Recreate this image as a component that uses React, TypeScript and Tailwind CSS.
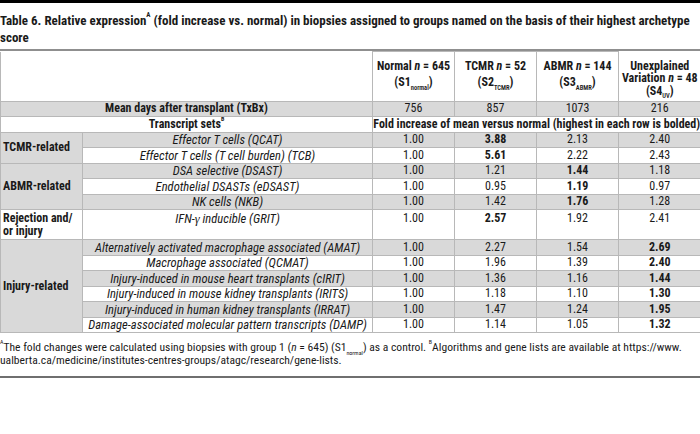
type Row = {
  cat?: string;
  span?: number;
  catGray?: boolean;
  name: React.ReactNode;
  v: string[];
  bold: number;
  tall?: boolean;
};

const ROWS: Row[] = [
  { cat: "TCMR-related", span: 2, catGray: true, name: "Effector T cells (QCAT)", v: ["1.00", "3.88", "2.13", "2.40"], bold: 1 },
  { name: "Effector T cells (T cell burden) (TCB)", v: ["1.00", "5.61", "2.22", "2.43"], bold: 1 },
  { cat: "ABMR-related", span: 3, catGray: true, name: "DSA selective (DSAST)", v: ["1.00", "1.21", "1.44", "1.18"], bold: 2 },
  { name: "Endothelial DSASTs (eDSAST)", v: ["1.00", "0.95", "1.19", "0.97"], bold: 2 },
  { name: "NK cells (NKB)", v: ["1.00", "1.42", "1.76", "1.28"], bold: 2 },
  {
    cat: "Rejection and/ or injury",
    span: 1,
    catGray: false,
    name: (
      <>
        IFN-<span className="font-['Liberation_Serif',serif]">γ</span> inducible (GRIT)
      </>
    ),
    v: ["1.00", "2.57", "1.92", "2.41"],
    bold: 1,
    tall: true,
  },
  { cat: "Injury-related", span: 6, catGray: true, name: "Alternatively activated macrophage associated (AMAT)", v: ["1.00", "2.27", "1.54", "2.69"], bold: 3 },
  { name: "Macrophage associated (QCMAT)", v: ["1.00", "1.96", "1.39", "2.40"], bold: 3 },
  { name: "Injury-induced in mouse heart transplants (cIRIT)", v: ["1.00", "1.36", "1.16", "1.44"], bold: 3 },
  { name: "Injury-induced in mouse kidney transplants (IRITS)", v: ["1.00", "1.18", "1.10", "1.30"], bold: 3 },
  { name: "Injury-induced in human kidney transplants (IRRAT)", v: ["1.00", "1.47", "1.24", "1.95"], bold: 3 },
  { name: "Damage-associated molecular pattern transcripts (DAMP)", v: ["1.00", "1.14", "1.05", "1.32"], bold: 3 },
];

const CELL = "border border-[#b8b8b8] p-0";

function GroupHead({ title, n, num, sub }: { title: string; n: string; num: string; sub: string }) {
  return (
    <th className={`${CELL} align-top pt-[6px] leading-[16px] font-bold text-center`}>
      <div>
        {title} <i>n</i> = {n}
      </div>
      <div>
        (S{num}
        <sub className="text-[6.5px] align-[-2px] font-semibold leading-none">{sub}</sub>)
      </div>
    </th>
  );
}

export default function App() {
  return (
    <div className="w-[700px] h-[434px] overflow-hidden bg-white text-[#1a1a1a] font-['Roboto_Condensed','Liberation_Sans_Narrow',sans-serif]">
      <div className="h-[3px] bg-black" />

      <div className="mt-[9px] text-[13px] font-bold leading-[17px]">
        <div className="whitespace-nowrap">
          Table 6. Relative expression<sup className="text-[7px] align-[5px]">A</sup> (fold increase vs. normal) in
          biopsies assigned to groups named on the basis of their highest archetype
        </div>
        <div>score</div>
      </div>

      <div className="mt-[3px] h-[2px] bg-[#8f8f8f]" />

      <table className="w-[700px] table-fixed border-collapse text-[12px] leading-[13px]">
        <colgroup>
          <col className="w-[82px]" />
          <col className="w-[290px]" />
          <col className="w-[82px]" />
          <col className="w-[82px]" />
          <col className="w-[82px]" />
          <col className="w-[82px]" />
        </colgroup>
        <thead>
          <tr className="h-[49.5px]">
            <th colSpan={2} className="border-l border-r border-b border-[#b8b8b8] p-0" />
            <GroupHead title="Normal" n="645" num="1" sub="normal" />
            <GroupHead title="TCMR" n="52" num="2" sub="TCMR" />
            <GroupHead title="ABMR" n="144" num="3" sub="ABMR" />
            <th className="border-b border-l border-[#b8b8b8] p-0 align-top pt-[8px] leading-[12.5px] font-bold text-center">
              <div>Unexplained</div>
              <div>
                Variation <i>n</i> = 48
              </div>
              <div>
                (S4<sub className="text-[6.5px] align-[-2px] font-semibold leading-none">UV</sub>)
              </div>
            </th>
          </tr>
        </thead>
        <tbody>
          <tr className="h-[15.5px] bg-[#d9d9d9]">
            <td colSpan={2} className={`${CELL} font-bold text-center`}>
              Mean days after transplant (TxBx)
            </td>
            <td className={`${CELL} text-center`}>756</td>
            <td className={`${CELL} text-center`}>857</td>
            <td className={`${CELL} text-center`}>1073</td>
            <td className={`${CELL} border-r-0 text-center`}>216</td>
          </tr>
          <tr className="h-[15.5px]">
            <td colSpan={2} className={`${CELL} font-bold text-center`}>
              Transcript sets<sup className="text-[6px] align-[4px] leading-none">B</sup>
            </td>
            <td colSpan={4} className={`${CELL} border-r-0 font-bold text-center whitespace-nowrap`}>
              Fold increase of mean versus normal (highest in each row is bolded)
            </td>
          </tr>
          {ROWS.map((r, i) => {
            const gray = i % 2 === 0;
            const va = r.tall ? "align-top pt-[2px]" : "align-middle";
            return (
              <tr key={i} className={`${r.tall ? "h-[30px]" : "h-[15.5px]"} ${gray ? "bg-[#d9d9d9]" : "bg-white"}`}>
                {r.cat && (
                  <td
                    rowSpan={r.span}
                    className={`${CELL} pl-[2px] text-left font-bold leading-[13px] align-middle ${r.catGray ? "bg-[#d9d9d9]" : "bg-white"}`}
                  >
                    {r.cat === "Rejection and/ or injury" ? (
                      <>
                        Rejection and/
                        <br />
                        or injury
                      </>
                    ) : (
                      r.cat
                    )}
                  </td>
                )}
                <td className={`${CELL} ${va} text-center italic text-[12.6px] whitespace-nowrap`}>{r.name}</td>
                {r.v.map((x, j) => (
                  <td
                    key={j}
                    className={`${CELL} ${va} ${j === 3 ? "border-r-0" : ""} text-center ${j === r.bold ? "font-bold" : ""}`}
                  >
                    {x}
                  </td>
                ))}
              </tr>
            );
          })}
        </tbody>
      </table>

      <div className="mt-[8px] text-[11.6px] leading-[13px] whitespace-nowrap">
        <div>
          <sup className="text-[6px] align-[4px] leading-none">A</sup>The fold changes were calculated using biopsies with
          group 1 (<i>n</i> = 645) (S1<sub className="text-[6px] align-[-2px] leading-none">normal</sub>) as a control.{" "}
          <sup className="text-[6px] align-[4px] leading-none">B</sup>Algorithms and gene lists are available at https://www.
        </div>
        <div>ualberta.ca/medicine/institutes-centres-groups/atagc/research/gene-lists.</div>
      </div>

      <div className="mt-[9px] h-[2px] bg-[#6f6f6f]" />
    </div>
  );
}
